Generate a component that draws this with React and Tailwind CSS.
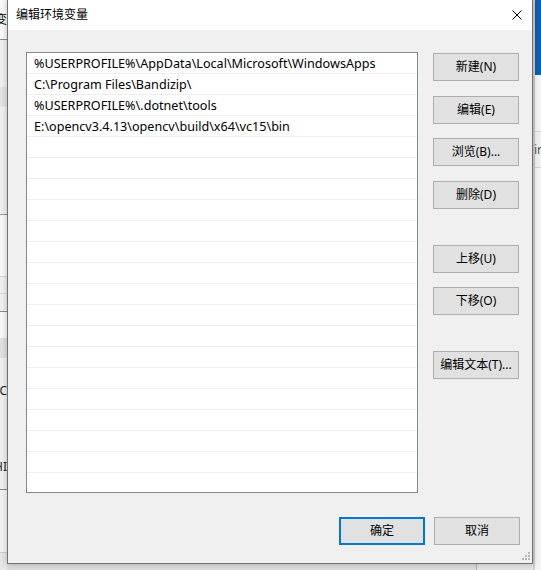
import React from 'react';

const paths = [
    '%USERPROFILE%\\AppData\\Local\\Microsoft\\WindowsApps',
    'C:\\Program Files\\Bandizip\\',
    '%USERPROFILE%\\.dotnet\\tools',
    'E:\\opencv3.4.13\\opencv\\build\\x64\\vc15\\bin',
];

const sideButtons = [
    { label: '新建(N)', mt: 'mt-[1px]' },
    { label: '编辑(E)', mt: 'mt-[15px]' },
    { label: '浏览(B)...', mt: 'mt-[14px]' },
    { label: '删除(D)', mt: 'mt-[15px]' },
    { label: '上移(U)', mt: 'mt-[36px]' },
    { label: '下移(O)', mt: 'mt-[14px]' },
    { label: '编辑文本(T)...', mt: 'mt-[36px]' },
];

const font = 'font-["Noto_Sans","Noto_Sans_CJK_SC",sans-serif]';

const Button = ({ label, className = '' }) => (
    <div className={`h-[28px] w-[86px] flex items-center justify-center bg-[#e1e1e1] border border-[#adadad] text-[12px] text-black ${className}`}>
        {label}
    </div>
);

const LeftStrip = () => (
    <div className="w-[7px] h-[570px] flex flex-col overflow-hidden bg-[#f0f0f0]">
        <div className="h-[40px] bg-[#f9f9f9] flex items-center justify-end overflow-hidden border-b border-[#8a8a8a] text-[12px] text-black">
            <span className="shrink-0">变</span>
        </div>
        <div className="h-[47px]" />
        <div className="h-[20px] bg-[#e3e3e3]" />
        <div className="h-[107px]" />
        <div className="h-[62px] border-t border-[#9a9a9a] bg-[#f7f7f7]" />
        <div className="h-[17px] border-t border-[#d6d6d6]" />
        <div className="h-[18px] border-t border-[#d6d6d6]" />
        <div className="h-[27px] border-t border-[#8a8a8a] bg-[#f7f7f7]" />
        <div className="h-[20px] bg-[#e0e0e0]" />
        <div className="h-[66px] flex items-start justify-end overflow-hidden text-[12px] text-[#222]">
            <span className="shrink-0 mt-[24px]">C</span>
        </div>
        <div className="h-[65px] flex items-start justify-end overflow-hidden text-[12px] text-[#222]">
            <span className="shrink-0 mt-[34px]">HI</span>
        </div>
        <div className="h-[63px] border-t border-[#8a8a8a] bg-[#f3f3f3]" />
        <div className="flex-1 border-t border-[#d0d0d0] bg-[#e6e6e6]" />
    </div>
);

const RightStrip = () => (
    <div className="w-[8px] h-[570px] flex flex-col overflow-hidden bg-[#f0f0f0] border-l-2 border-[#d0d0d0]">
        <div className="h-[75px] bg-[#0b5fb5]" />
        <div className="h-[56px] bg-[#f3f3f3]" />
        <div className="h-[37px] border-y border-[#d4d4d4] flex items-center overflow-hidden text-[12px] text-[#555]">
            <span className="shrink-0 -ml-[1px]">ir</span>
        </div>
        <div className="flex-1 bg-[#f3f3f3]" />
    </div>
);

const ResizeGrip = () => (
    <svg className="absolute right-[1px] bottom-[2px]" width="10" height="10" viewBox="0 0 10 10">
        <rect x="7" y="1" width="2" height="2" fill="#b8b8b8" />
        <rect x="4" y="4" width="2" height="2" fill="#b8b8b8" />
        <rect x="7" y="4" width="2" height="2" fill="#b8b8b8" />
        <rect x="1" y="7" width="2" height="2" fill="#b8b8b8" />
        <rect x="4" y="7" width="2" height="2" fill="#b8b8b8" />
        <rect x="7" y="7" width="2" height="2" fill="#b8b8b8" />
    </svg>
);

const App = () => {
    const rows = Array.from({ length: 21 }, (_, i) => paths[i] || '');

    return (
        <div className={`w-[541px] h-[570px] flex overflow-hidden bg-[#e8e8e8] ${font}`}>
            <LeftStrip />

            <div className="w-[526px] flex flex-col">
                <div className="relative h-[564px] flex flex-col bg-[#f0f0f0] border-l border-r border-b border-[#727272] shadow-[0_0_6px_rgba(0,0,0,0.25)]">
                    {/* title bar */}
                    <div className="h-[30px] bg-white flex items-center justify-between pl-2 pr-[10px]">
                        <span className="text-[12px] text-black">编辑环境变量</span>
                        <svg width="10" height="10" viewBox="0 0 10 10">
                            <path d="M0.5 0.5 L9.5 9.5 M9.5 0.5 L0.5 9.5" stroke="#000" strokeWidth="1" />
                        </svg>
                    </div>

                    <div className="flex pt-[22px] pl-[18px] pr-[12px] gap-[15px]">
                        <div className="w-[392px] h-[441px] bg-white border border-[#828790] overflow-hidden">
                            {rows.map((p, i) => (
                                <div key={i} className="h-[21px] border-b border-[#efefef] pl-[7px] pt-[2px] flex items-center text-[12.6px] text-black whitespace-nowrap">
                                    {p}
                                </div>
                            ))}
                        </div>
                        <div className="flex flex-col">
                            {sideButtons.map(b => (
                                <Button key={b.label} label={b.label} className={b.mt} />
                            ))}
                        </div>
                    </div>

                    <div className="flex justify-end gap-[9px] pr-[12px] mt-[24px]">
                        <div className="h-[28px] w-[86px] flex items-center justify-center bg-[#e1e1e1] border-2 border-[#0078d7] text-[12px] text-black">
                            确定
                        </div>
                        <Button label="取消" />
                    </div>

                    <ResizeGrip />
                </div>
                <div className="flex-1 flex">
                    <div className="w-[469px] bg-[#dcdcdc]" />
                    <div className="flex-1 border-l border-[#b0b0b0] bg-[#e4e4e4]" />
                </div>
            </div>

            <RightStrip />
        </div>
    );
};

export default App;
